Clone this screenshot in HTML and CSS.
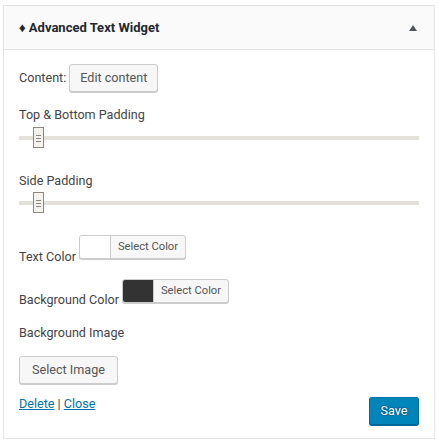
FILE: index.html
```html
<!DOCTYPE html>
<html>
<head>
<meta charset="utf-8">
<link rel="stylesheet" href="styles.css">
</head>
<body>
<div class="widget">
  <div class="widget-top">
    <h3 class="widget-title">♦ Advanced Text Widget</h3>
    <span class="toggle"></span>
  </div>
  <div class="widget-inside">
    <div class="row-content">
      <span class="label">Content:</span>
      <button class="btn">Edit content</button>
    </div>
    <div class="label block l-top">Top &amp; Bottom Padding</div>
    <div class="slider s1"><span class="handle"></span></div>
    <div class="label block l-side">Side Padding</div>
    <div class="slider s2"><span class="handle"></span></div>
    <div class="color-row c1">
      <span class="label">Text Color</span>
      <span class="color-result"><span class="swatch light"></span><span class="cr-text">Select Color</span></span>
    </div>
    <div class="color-row c2">
      <span class="label">Background Color</span>
      <span class="color-result"><span class="swatch dark"></span><span class="cr-text">Select Color</span></span>
    </div>
    <div class="label block l-img">Background Image</div>
    <button class="btn btn-img">Select Image</button>
    <div class="controls">
      <div class="links"><a href="#">Delete</a> | <a href="#">Close</a></div>
      <button class="btn-primary">Save</button>
    </div>
  </div>
</div>
</body>
</html>
```
FILE: styles.css
```css
html, body {
  margin: 0;
  padding: 0;
  background: #fff;
}
body {
  padding: 5px 4px 0 3px;
  font-family: Roboto, "Liberation Sans", sans-serif;
  font-size: 12.6px;
  color: #444;
}
.widget {
  width: 430px;
  border: 1px solid #e5e5e5;
  box-shadow: 0 1px 1px rgba(0,0,0,.04);
  background: #fff;
}
.widget-top {
  display: flex;
  align-items: center;
  justify-content: space-between;
  height: 43px;
  background: #fafafa;
  border-bottom: 1px solid #e5e5e5;
  padding: 0 17px 0 15px;
}
.widget-title {
  margin: 0;
  font-size: 13px;
  font-weight: 700;
  color: #23282d;
}
.toggle {
  width: 0;
  height: 0;
  border-left: 4px solid transparent;
  border-right: 4px solid transparent;
  border-bottom: 6px solid #50575e;
}
.widget-inside {
  display: flex;
  flex-direction: column;
  align-items: flex-start;
  padding: 0 15px 13px 15px;
}
.label {
  line-height: 18px;
}
.block {
  display: block;
}
.row-content {
  display: flex;
  align-items: center;
  margin-top: 14px;
}
.row-content .label {
  margin-right: 3px;
}
.btn {
  font-family: Roboto, "Liberation Sans", sans-serif;
  font-size: 12.6px;
  color: #555;
  background: #f7f7f7;
  border: 1px solid #ccc;
  border-radius: 3px;
  box-shadow: 0 1px 0 #ccc;
  height: 28px;
  padding: 0 10px;
  line-height: 26px;
  margin: 0;
}
.l-top { margin-top: 14px; }
.slider {
  position: relative;
  align-self: stretch;
  height: 4px;
  background: #e4e0da;
}
.s1 { margin-top: 12px; margin-bottom: 9px; }
.s2 { margin-top: 11px; margin-bottom: 9px; }
.l-side { margin-top: 23px; }
.handle {
  position: absolute;
  left: 14px;
  top: -9px;
  width: 9px;
  height: 19px;
  border: 1px solid #8f877d;
  background: #f4f2ef linear-gradient(#8f877d, #8f877d) no-repeat center 7px / 5px 1px;
}
.handle::before, .handle::after {
  content: "";
  position: absolute;
  left: 2px;
  width: 5px;
  height: 1px;
  background: #8f877d;
}
.handle::before { top: 10px; }
.handle::after { top: 13px; }
.color-row {
  display: flex;
  align-items: flex-end;
}
.c1 { margin-top: 21px; }
.c1 .color-result { margin-bottom: 7px; }
.c2 { margin-top: 13px; }
.c2 .color-result { margin-bottom: 6px; }
.color-row .label { margin-right: 3px; }
.color-result {
  display: flex;
  height: 22px;
  border: 1px solid #ccc;
  border-radius: 3px;
  box-shadow: 0 1px 0 #ccc;
  background: #f7f7f7;
  overflow: hidden;
}
.swatch {
  width: 30px;
  border-right: 1px solid #ccc;
}
.swatch.light { background: #fff; }
.swatch.dark { background: #333; border-right-color: #ccc; }
.cr-text {
  font-size: 11.2px;
  line-height: 21px;
  color: #555;
  padding: 0 7px 0 7px;
}
.l-img { margin-top: 15px; }
.btn-img {
  display: block;
  margin-top: 14px;
  width: 99px;
  padding: 0;
}
.controls {
  align-self: stretch;
  display: flex;
  justify-content: space-between;
  align-items: flex-start;
  margin-top: 11px;
}
.links {
  line-height: 18px;
}
.links a {
  color: #0073aa;
  text-decoration: underline;
}
.btn-primary {
  margin-top: 2px;
  font-family: Roboto, "Liberation Sans", sans-serif;
  font-size: 12.6px;
  color: #fff;
  background: #0085ba;
  border: 1px solid;
  border-color: #0073aa #006799 #006799;
  border-radius: 3px;
  box-shadow: 0 1px 0 #006799;
  text-shadow: 0 -1px 1px #006799, 1px 0 1px #006799, 0 1px 1px #006799, -1px 0 1px #006799;
  height: 28px;
  width: 50px;
  padding: 0;
  line-height: 26px;
}
```
